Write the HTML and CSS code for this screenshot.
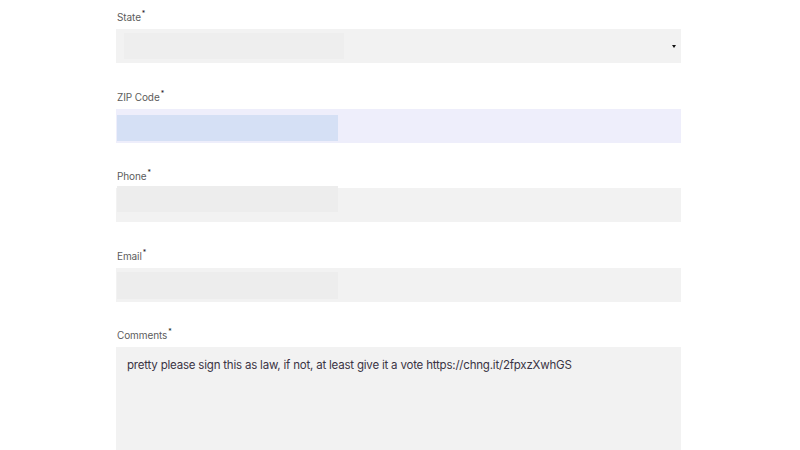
FILE: index.html
```html
<!DOCTYPE html>
<html>
<head>
<meta charset="utf-8">
<link rel="stylesheet" href="styles.css">
</head>
<body>
<form class="form">
  <div class="group">
    <label class="label">State<sup>*</sup></label>
    <div class="box select">
      <span class="overlay ov-state"></span>
      <span class="caret"></span>
    </div>
  </div>
  <div class="group">
    <label class="label">ZIP Code<sup>*</sup></label>
    <div class="box focus">
      <span class="overlay ov-zip"></span>
    </div>
  </div>
  <div class="group">
    <label class="label">Phone<sup>*</sup></label>
    <div class="box">
      <span class="overlay ov-phone"></span>
    </div>
  </div>
  <div class="group">
    <label class="label">Email<sup>*</sup></label>
    <div class="box">
      <span class="overlay ov-email"></span>
    </div>
  </div>
  <div class="group">
    <label class="label">Comments<sup>*</sup></label>
    <div class="box area">pretty please sign this as law, if not, at least give it a vote https://chng.it/2fpxzXwhGS</div>
  </div>
</form>
</body>
</html>
```

FILE: styles.css
```css
html, body {
  margin: 0;
  padding: 0;
  background: #ffffff;
  overflow: hidden;
  height: 450px;
}
.form {
  display: flex;
  flex-direction: column;
  gap: 25.5px;
  width: 565px;
  margin-left: 116px;
  padding-top: 9px;
  font-family: Inter, "Noto Sans", sans-serif;
}
.group {
  display: flex;
  flex-direction: column;
  gap: 4px;
}
.label {
  font-size: 10px;
  line-height: 16px;
  color: #5c5c5c;
  padding-left: 1px;
  letter-spacing: -0.1px;
}
.label sup {
  font-size: 7px;
  line-height: 0;
  vertical-align: 5px;
  margin-left: 1px;
  color: #222222;
}
.box {
  position: relative;
  height: 34px;
  background: #f2f2f2;
}
.box.focus {
  background: #eeeefb;
}
.overlay {
  position: absolute;
  display: block;
}
.ov-state {
  left: 8px;
  top: 4px;
  width: 220px;
  height: 26px;
  background: #eeeeee;
}
.ov-zip {
  left: 1px;
  top: 6px;
  width: 221px;
  height: 26px;
  background: #d5e0f5;
}
.ov-phone {
  left: 1px;
  top: -2px;
  width: 221px;
  height: 26px;
  background: #ededed;
}
.ov-email {
  left: 1px;
  top: 4px;
  width: 221px;
  height: 27px;
  background: #ededed;
}
.caret {
  position: absolute;
  right: 5px;
  top: 16px;
  width: 0;
  height: 0;
  border-left: 2.5px solid transparent;
  border-right: 2.5px solid transparent;
  border-top: 3px solid #111111;
}
.box.area {
  height: 120px;
  padding: 10px 11px;
  box-sizing: border-box;
  font-size: 11.5px;
  letter-spacing: -0.2px;
  line-height: 16px;
  color: #3a3444;
}
```
